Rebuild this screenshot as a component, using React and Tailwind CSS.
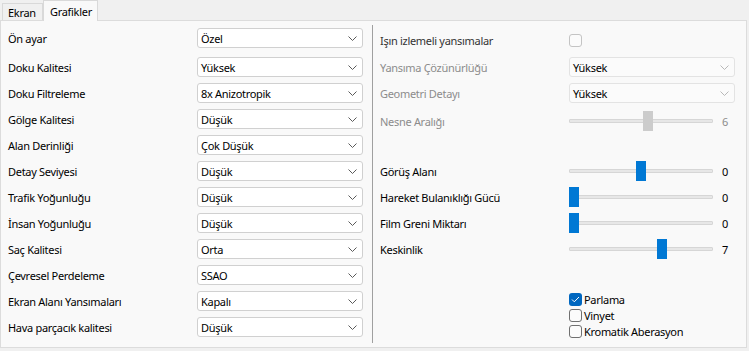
import React from "react";

const FONT = { fontFamily: '"Noto Sans", "Open Sans", sans-serif' };
const TXT = "text-[11px] tracking-[-0.3px] leading-none";

function Chevron({ disabled }) {
  return (
    <svg width="9" height="5" viewBox="0 0 9 5" className="shrink-0">
      <polyline
        points="0.5,0.5 4.5,4.5 8.5,0.5"
        fill="none"
        stroke={disabled ? "#b8b8b8" : "#5a5a5a"}
        strokeWidth="1"
      />
    </svg>
  );
}

function Combo({ value, disabled }) {
  return (
    <div
      className={
        "flex h-[20px] w-[166px] items-center justify-between rounded-[3px] border pl-[3px] pr-[5px] " +
        (disabled ? "border-[#e3e3e3] bg-[#fbfbfb]" : "border-[#d0d0d0] bg-white")
      }
    >
      <span className={TXT + " text-black"}>{value}</span>
      <Chevron disabled={disabled} />
    </div>
  );
}

function LeftRow({ label, value }) {
  return (
    <div className="flex h-[20px] items-center justify-between">
      <span className={TXT + " text-black"}>{label}</span>
      <Combo value={value} />
    </div>
  );
}

function Slider({ pos, disabled, value }) {
  return (
    <div className="flex items-center">
      <div className="relative h-[20px] w-[144px]">
        <div className="absolute left-0 right-0 top-[8px] h-[4px] rounded-[1px] border border-[#d6d6d6] bg-[#e7e7e7]" />
        <div
          className={
            "absolute top-0 h-[20px] w-[10px] " +
            (disabled ? "bg-[#cccccc]" : "bg-[#0078d4]")
          }
          style={{ left: pos }}
        />
      </div>
      <span className={"ml-[9px] " + TXT + (disabled ? " text-[#8c8c8c]" : " text-black")}>
        {value}
      </span>
    </div>
  );
}

function RightRow({ label, dim, dark, children, className = "" }) {
  return (
    <div className={"flex h-[20px] items-center " + className}>
      <span
        className={
          "w-[189px] " +
          TXT +
          (dim ? " text-[#8c8c8c]" : dark ? " text-[#333333]" : " text-black")
        }
      >
        {label}
      </span>
      {children}
    </div>
  );
}

function Check({ checked, label }) {
  return (
    <div className="flex h-[16px] items-center">
      {checked ? (
        <div className="flex h-[13px] w-[13px] items-center justify-center rounded-[3px] bg-[#0067c0]">
          <svg width="9" height="7" viewBox="0 0 9 7">
            <polyline points="1,3.5 3.3,5.8 8,1" fill="none" stroke="white" strokeWidth="1" />
          </svg>
        </div>
      ) : (
        <div className="h-[13px] w-[13px] rounded-[3px] border border-[#707070] bg-[#fbfbfb]" />
      )}
      <span className={"ml-[2px] " + TXT + " text-black"}>{label}</span>
    </div>
  );
}

export default function App() {
  const left = [
    ["Doku Kalitesi", "Yüksek"],
    ["Doku Filtreleme", "8x Anizotropik"],
    ["Gölge Kalitesi", "Düşük"],
    ["Alan Derinliği", "Çok Düşük"],
    ["Detay Seviyesi", "Düşük"],
    ["Trafik Yoğunluğu", "Düşük"],
    ["İnsan Yoğunluğu", "Düşük"],
    ["Saç Kalitesi", "Orta"],
    ["Çevresel Perdeleme", "SSAO"],
    ["Ekran Alanı Yansımaları", "Kapalı"],
    ["Hava parçacık kalitesi", "Düşük"],
  ];
  return (
    <div className="h-[351px] w-[749px] overflow-hidden bg-[#f0f0f0]" style={FONT}>
      <div className="flex h-[20px] items-end pl-[2px]">
        <div className={"flex h-[17px] w-[41px] items-center border border-b-0 border-[#d9d9d9] bg-[#f0f0f0] pl-[5px] text-black " + TXT}>
          Ekran
        </div>
        <div className={"relative z-10 -mb-px flex h-[21px] w-[55px] items-center border border-b-0 border-[#d9d9d9] bg-[#f9f9f9] pl-[6px] text-black " + TXT}>
          Grafikler
        </div>
      </div>
      <div className="flex h-[328px] w-[747px] border border-[#dcdcdc] bg-[#f9f9f9]">
        <div className="w-[371px] pl-[7px] pr-[9px] pt-[7px]">
          <div className="mb-[9px]">
            <LeftRow label="Ön ayar" value="Özel" />
          </div>
          <div className="flex flex-col gap-[6px]">
            {left.map(([l, v]) => (
              <LeftRow key={l} label={l} value={v} />
            ))}
          </div>
        </div>
        <div className="mb-[4px] mt-[4px] w-px bg-[#a0a0a0]" />
        <div className="flex-1 pl-[7px] pt-[9px]">
          <RightRow label="Işın izlemeli yansımalar" dark>
            <div className="h-[13px] w-[13px] rounded-[3px] border border-[#c4c4c4] bg-[#fbfbfb]" />
          </RightRow>
          <RightRow label="Yansıma Çözünürlüğü" dim className="mt-[7px]">
            <Combo value="Yüksek" disabled />
          </RightRow>
          <RightRow label="Geometri Detayı" dim className="mt-[6px]">
            <Combo value="Yüksek" disabled />
          </RightRow>
          <RightRow label="Nesne Aralığı" dim className="mt-[8px]">
            <Slider pos={74} disabled value="6" />
          </RightRow>
          <RightRow label="Görüş Alanı" className="mt-[30px]">
            <Slider pos={67} value="0" />
          </RightRow>
          <RightRow label="Hareket Bulanıklığı Gücü" className="mt-[6px]">
            <Slider pos={0} value="0" />
          </RightRow>
          <RightRow label="Film Greni Miktarı" className="mt-[6px]">
            <Slider pos={0} value="0" />
          </RightRow>
          <RightRow label="Keskinlik" className="mt-[6px]">
            <Slider pos={88} value="7" />
          </RightRow>
          <div className="ml-[189px] mt-[32px] flex flex-col">
            <Check checked label="Parlama" />
            <Check label="Vinyet" />
            <Check label="Kromatik Aberasyon" />
          </div>
        </div>
      </div>
    </div>
  );
}
